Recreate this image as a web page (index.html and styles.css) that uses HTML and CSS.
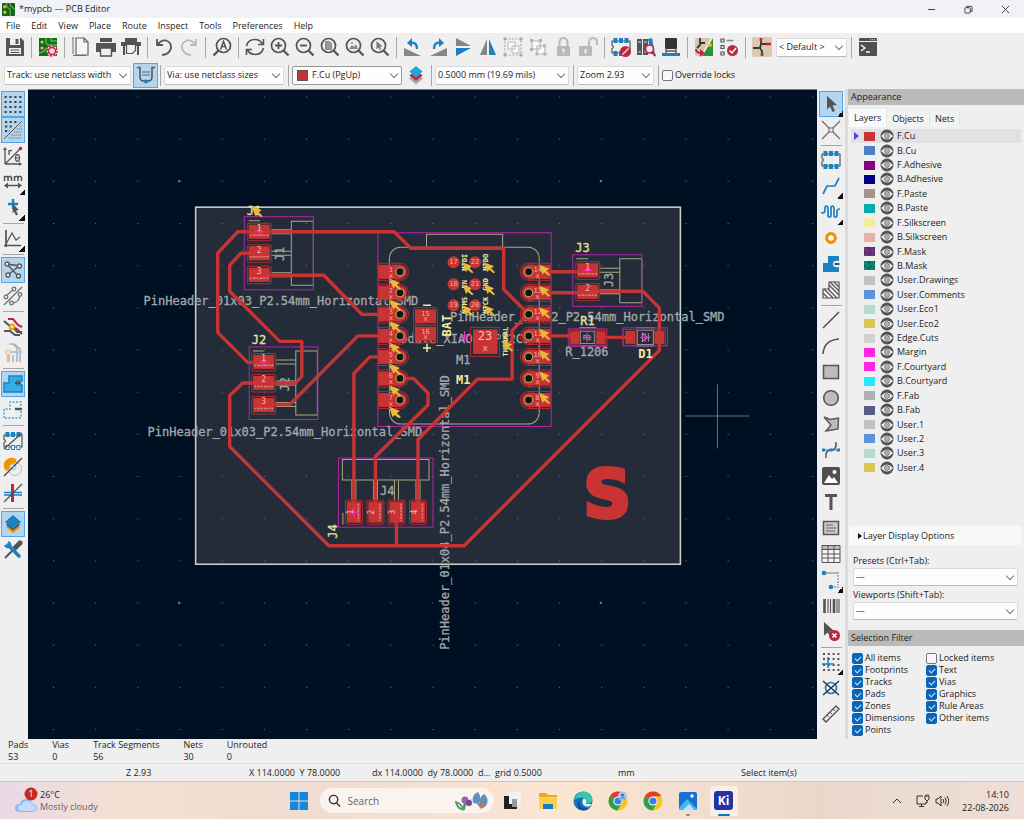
FILE: index.html
```html
<!DOCTYPE html>
<html lang="en">
<head>
<meta charset="utf-8">
<title>*mypcb — PCB Editor</title>
<meta name="viewport" content="width=device-width, initial-scale=1">
<link rel="stylesheet" href="styles.css">
</head>
<body>
<svg class="defs" aria-hidden="true">
  <defs>
    <symbol id="eye" viewBox="0 0 14 14"><circle cx="7" cy="7" r="6.500" fill="#545454"/><path d="M1 7Q7 0 13 7Q7 14 1 7Z" fill="#efefef"/><circle cx="7" cy="7" r="2.300" fill="none" stroke="#545454" stroke-width="1"/><circle cx="7" cy="7" r=".8" fill="#545454"/></symbol>
    <symbol id="mag" viewBox="0 0 20 20"><circle cx="8.500" cy="8.500" r="7" fill="none" stroke="#545454" stroke-width="1.700"/><path d="M13.500 13.500l5 5" stroke="#545454" stroke-width="2.300"/></symbol>
    <symbol id="lockbody" viewBox="0 0 20 20"><rect x="4" y="9" width="13" height="10" rx="1" fill="#b9b9b9"/><circle cx="10.500" cy="13" r="1.500" fill="#eee"/><path d="M10.500 13v3.500" stroke="#eee" stroke-width="1.300"/></symbol>
    <symbol id="fp" viewBox="0 0 20 20"><path d="M1 4v4.500q3 1.500 0 3V16H19V4Z" fill="none" stroke="#545454" stroke-width="1.200"/><path d="M2.500 1h4v5h-4zM8 1h4v5H8zM13.500 1h4v5h-4zM2.500 14h4v5h-4zM8 14h4v5H8zM13.500 14h4v5h-4z" fill="#1a81c4"/></symbol>
    <symbol id="cursor" viewBox="0 0 20 20"><path d="M6 2L16 11L11.500 11.500L14 17L11.500 18L9 12.500L6 15.500Z" fill="#545454"/></symbol>
    <symbol id="nogo" viewBox="0 0 10 10"><circle cx="5" cy="5" r="5" fill="#bf2641"/></symbol>
    <symbol id="chrome" viewBox="0 0 20 20"><circle cx="10" cy="10" r="9.500" fill="#f9c51c"/><path d="M10 10L1.800 5.200A9.500 9.500 0 0 1 18.300 5.300H10Z" fill="#e33b2e"/><path d="M10 10L1.800 5.200A9.500 9.500 0 0 0 9.500 19.500L14 12Z" fill="#2da14c"/><circle cx="10" cy="10" r="4.600" fill="#fff"/><circle cx="10" cy="10" r="3.600" fill="#3f7ee8"/></symbol>
  </defs>
</svg>

<header class="titlebar">
  <svg class="app-icon" viewBox="0 0 14 14"><rect width="14" height="14" rx="1" fill="#12641c"/><path d="M5 0v4l4 3v7M9 0v3l5 4" stroke="#53a846" stroke-width="1.500" fill="none"/><circle cx="3" cy="4" r="1.800" fill="#e0b13d"/><circle cx="3" cy="10" r="1.800" fill="#e0b13d"/></svg>
  <h1>*mypcb — PCB Editor</h1>
  <div class="window-controls">
    <button aria-label="Minimize"><svg viewBox="0 0 10 10"><path d="M1 5h8" /></svg></button>
    <button aria-label="Restore"><svg viewBox="0 0 10 10"><rect x="1" y="3" width="6" height="6" rx="1"/><path d="M3 3V1.500h5q1 0 1 1V7H7"/></svg></button>
    <button aria-label="Close"><svg viewBox="0 0 10 10"><path d="M1 1l8 8M9 1l-8 8"/></svg></button>
  </div>
</header>

<nav class="menubar" aria-label="Main menu">
  <button>File</button><button>Edit</button><button>View</button><button>Place</button><button>Route</button><button>Inspect</button><button>Tools</button><button>Preferences</button><button>Help</button>
</nav>

<div class="toolbar icons" role="toolbar" aria-label="Main toolbar">
  <button aria-label="Save"><svg viewBox="0 0 20 20"><path d="M1 1h15l3 3v15H1Z" fill="#545454"/><path d="M5 1h10v7H5zM4 11h12v6H4z" fill="#efefef"/><path d="M10.500 2h3v5h-3z" fill="#545454"/><path d="M5.500 13h9M5.500 15.500h9" stroke="#545454"/></svg></button>
  <span class="sep"></span>
  <button aria-label="Board setup"><svg viewBox="0 0 20 20"><rect x="1" y="1" width="18" height="18" fill="#136b1e"/><path d="M8 1v4q0 3 4 3h7M1 16q6-1 7-5M13 1v3h6" stroke="#5cb04c" stroke-width="1.500" fill="none"/><circle cx="4" cy="5" r="1.500" fill="#e9c14a"/><circle cx="4" cy="11" r="1.500" fill="#e9c14a"/><circle cx="14" cy="14" r="5.500" fill="#f3dfe3"/><circle cx="14" cy="14" r="3.500" fill="none" stroke="#cc2048" stroke-width="1.500"/><circle cx="14" cy="14" r="5" fill="none" stroke="#cc2048" stroke-width="1.500" stroke-dasharray="2 1.920"/></svg></button>
  <span class="sep"></span>
  <button aria-label="Page settings"><svg viewBox="0 0 20 20"><path d="M5 1h8l4 4v13H5ZM13 1v4h4" fill="#f6f6f6" stroke="#656565" stroke-width="1.200"/><path d="M2 1v16M1 1h2M2 18.500h13" stroke="#656565" stroke-width=".9"/></svg></button>
  <button aria-label="Print"><svg viewBox="0 0 20 20"><path d="M4 1h12v4H4zM0 6h20v9h-4v-3H4v3H0z" fill="#545454"/><path d="M4.500 11h11v8h-11z" fill="#efefef" stroke="#545454" stroke-width="1.400"/></svg></button>
  <button aria-label="Plot"><svg viewBox="0 0 20 20"><path d="M4 1h12v4H4zM0 5h20v4H0zM2 9h2v9H2zM16 9h2v9h-2z" fill="#545454"/><path d="M5.500 7.500h9v6l-3 3h-6z" fill="#efefef" stroke="#545454" stroke-width="1.200"/></svg></button>
  <span class="sep"></span>
  <button aria-label="Undo"><svg viewBox="0 0 20 20"><path d="M3 2v6h6M3.500 8Q7 2.500 12 3.500Q17.500 5 17 11Q15.500 17.500 8 18" fill="none" stroke="#545454" stroke-width="1.800"/></svg></button>
  <button aria-label="Redo" disabled><svg viewBox="0 0 20 20"><path d="M17 2v6h-6M16.500 8Q13 2.500 8 3.500Q2.500 5 3 11Q4.500 17.500 12 18" fill="none" stroke="#b9b9b9" stroke-width="1.800"/></svg></button>
  <span class="sep"></span>
  <button aria-label="Find"><svg viewBox="0 0 20 20"><circle cx="11.500" cy="8.500" r="7" fill="none" stroke="#545454" stroke-width="1.700"/><path d="M6.500 13.500l-5 5" stroke="#545454" stroke-width="2.300"/><path d="M8.500 12.500l3-8 3 8M9.500 9.500h4" fill="none" stroke="#545454" stroke-width="1.500"/></svg></button>
  <span class="sep"></span>
  <button aria-label="Refresh"><svg viewBox="0 0 20 20"><path d="M1.500 9Q3 2.500 10 2.500Q15 2.500 17.500 7M18.500 2v5.500H13M18.500 11Q17 17.500 10 17.500Q5 17.500 2.500 13M1.500 18v-5.500H7" fill="none" stroke="#545454" stroke-width="1.600"/></svg></button>
  <button aria-label="Zoom in"><svg viewBox="0 0 20 20"><use href="#mag"/><path d="M5 8.500h7M8.500 5v7" stroke="#545454" stroke-width="1.800"/></svg></button>
  <button aria-label="Zoom out"><svg viewBox="0 0 20 20"><use href="#mag"/><path d="M5 8.500h7" stroke="#545454" stroke-width="1.800"/></svg></button>
  <button aria-label="Zoom to fit"><svg viewBox="0 0 20 20"><use href="#mag"/><path d="M5.500 4.500h4l2 2v6h-6z" fill="#999" stroke="#777" stroke-width=".8"/></svg></button>
  <button aria-label="Zoom to objects"><svg viewBox="0 0 20 20"><use href="#mag"/><path d="M4 12l3-4 2 2 2-3 2 5z" fill="#888"/><circle cx="7" cy="6" r="1" fill="#888"/></svg></button>
  <button aria-label="Zoom to selection"><svg viewBox="0 0 20 20"><use href="#mag"/><path d="M6.500 4l6 5.500-2.500.3 1.200 2.700-1.300.6-1.200-2.700-2.200 1.800z" fill="#777"/></svg></button>
  <span class="sep"></span>
  <button aria-label="Rotate counterclockwise"><svg viewBox="0 0 20 20"><path d="M1 11L18 19H1Z" fill="#858585"/><path d="M6 6q8-2 8 6" fill="none" stroke="#1a81c4" stroke-width="2.200"/><path d="M9 1L4 6L9 10Z" fill="#1a81c4"/></svg></button>
  <button aria-label="Rotate clockwise"><svg viewBox="0 0 20 20"><path d="M19 11L2 19H19Z" fill="#858585"/><path d="M14 6q-8-2-8 6" fill="none" stroke="#1a81c4" stroke-width="2.200"/><path d="M11 1L16 6L11 10Z" fill="#1a81c4"/></svg></button>
  <button aria-label="Flip vertically"><svg viewBox="0 0 20 20"><path d="M3 1L18 9H3Z" fill="#858585"/><path d="M3 19L18 11H3Z" fill="#1a81c4"/></svg></button>
  <button aria-label="Mirror"><svg viewBox="0 0 20 20"><path d="M9 2V18H2Z" fill="#858585"/><path d="M11 2V18H18Z" fill="#1a81c4"/></svg></button>
  <button aria-label="Group" disabled><svg viewBox="0 0 20 20"><rect x="2" y="2" width="16" height="16" fill="none" stroke="#aaa" stroke-width="1.200" stroke-dasharray="2 1.500"/><path d="M0.500.5h3v3h-3zM16.500.5h3v3h-3zM.5 16.500h3v3h-3zM16.500 16.500h3v3h-3z" fill="#aaa"/><path d="M5 5h7v7H5zM9 9h7v7H9z" fill="#fafafa" stroke="#bbb"/></svg></button>
  <button aria-label="Ungroup" disabled><svg viewBox="0 0 20 20"><path d="M4 4h8v8H4zM9 9h8v8H9z" fill="#fafafa" stroke="#b3b3b3" stroke-width="1.200"/><path d="M2 2h3v3H2zM11 2h3v3h-3zM2 11h3v3H2zM15 7.500h3v3h-3zM7.500 15.500h3v3h-3zM15.500 15.500h3v3h-3z" fill="#b3b3b3"/></svg></button>
  <button aria-label="Lock" disabled><svg viewBox="0 0 20 20"><use href="#lockbody"/><path d="M6.500 9V6q0-5 4-5t4 5v3" fill="none" stroke="#b9b9b9" stroke-width="2"/></svg></button>
  <button aria-label="Unlock" disabled><svg viewBox="0 0 20 20"><path d="M1 9h13v9q0 1-1 1H2q-1 0-1-1z" fill="#b9b9b9"/><path d="M7.500 12v4.500" stroke="#eee" stroke-width="2"/><path d="M11 9V6q0-5 4-5t4 5v2" fill="none" stroke="#b9b9b9" stroke-width="2"/></svg></button>
  <span class="sep"></span>
  <button aria-label="Footprint editor"><svg viewBox="0 0 20 20"><use href="#fp"/><use href="#nogo" x="9" y="9" width="11" height="11"/><path d="M11.500 17.500l6-6" stroke="#f2d5da" stroke-width="1.500"/></svg></button>
  <button aria-label="Footprint library"><svg viewBox="0 0 20 20"><path d="M1 2h5v16H1zM7 2h5v16H7z" fill="#545454"/><path d="M2 5h3M8 5h3M2 15h3M8 15h3" stroke="#ddd"/><path d="M12 2l4-1 3 16h-4z" fill="#1a81c4"/><circle cx="13.500" cy="12" r="4" fill="#f3e9ee" stroke="#bf2641" stroke-width="1.700"/><path d="M16 15l3.500 4" stroke="#bf2641" stroke-width="2.200"/></svg></button>
  <button aria-label="Footprint viewer"><svg viewBox="0 0 20 20"><rect x="4" y="1" width="12" height="11" rx="1" fill="#333"/><path d="M5 12v4M15 12v4M5 14h10" stroke="#555" stroke-width="1.300"/><path d="M1 16h18v3H1z" fill="#1a81c4"/></svg></button>
  <span class="sep"></span>
  <button aria-label="Update from schematic"><svg viewBox="0 0 20 20"><rect x="1" y="1" width="18" height="18" rx="2" fill="#d5c7ad"/><path d="M19 1L8 19H19Z" fill="#2f8f35"/><path d="M18 1L8 18" stroke="#eee" stroke-width="1.500"/><path d="M6 1v7L3 11M6 6h5" stroke="#333" stroke-width="1.800" fill="none"/><circle cx="16" cy="8" r="2" fill="#f0b429"/><path d="M2 12q0 4 5 4" stroke="#bf2641" stroke-width="2" fill="none"/><path d="M6 12l5 4-5 4z" fill="#bf2641"/></svg></button>
  <button aria-label="Design rules checker"><svg viewBox="0 0 20 20"><path d="M2 2h3v3H2zM2 8.500h3v3H2zM2 15h3v3H2z" fill="none" stroke="#545454" stroke-width="1.200"/><path d="M7.500 3.500h7" stroke="#888" stroke-width="1.600"/><use href="#nogo" x="8" y="8" width="11" height="11"/><path d="M10.500 13.500l2.500 2.500 4-5" fill="none" stroke="#fff" stroke-width="1.500"/></svg></button>
  <span class="sep"></span>
  <button aria-label="Schematic editor"><svg viewBox="0 0 20 20"><rect width="20" height="20" rx="2" fill="#d8c9af"/><path d="M9 1v6l-1 4M9 7h6M7 11H1M7 10l3 4v5" stroke="#3a3a3a" stroke-width="1.800" fill="none"/><path d="M9 1v3M14 7h5M10 16v3" stroke="#bf2641" stroke-width="2.600"/></svg></button>
  <span class="combo combo-set"><select aria-label="Variant"><option>&lt; Default &gt;</option></select></span>
  <span class="sep"></span>
  <button aria-label="Scripting console"><svg viewBox="0 0 20 20"><rect x="1" y="1" width="18" height="18" rx="1" fill="#4f4f4f"/><path d="M1 4.500h18" stroke="#eee"/><path d="M12 2.700h6" stroke="#ddd" stroke-dasharray="1 1"/><path d="M3 8l4 3-4 3M8 15h4" stroke="#fff" stroke-width="1.300" fill="none"/></svg></button>
</div>

<div class="toolbar options" role="toolbar" aria-label="Board options">
  <span class="combo combo-track"><select aria-label="Track width"><option>Track: use netclass width</option></select></span>
  <button class="active" aria-label="Use existing track width"><svg viewBox="0 0 20 20"><path d="M1 2.500h3V12q0 4 4 4h4q4 0 4-4V2.500h3" fill="none" stroke="#545454" stroke-width="1.500"/><path d="M6 7h8M6 10h8" stroke="#666" stroke-width="1.200"/><circle cx="10" cy="16.500" r="2" fill="#1a81c4"/></svg></button>
  <span class="sep"></span>
  <span class="combo combo-via"><select aria-label="Via size"><option>Via: use netclass sizes</option></select></span>
  <span class="sep"></span>
  <span class="combo combo-layer"><i class="swatch"></i><select aria-label="Active layer"><option>F.Cu (PgUp)</option></select></span>
  <button aria-label="Layer pair"><svg viewBox="0 0 20 20"><path d="M10 8l7 5.500-7 6-7-6z" fill="#aaa"/><path d="M10 5l6.500 5.500L10 16l-6.500-5.500z" fill="#bf2641"/><path d="M10 1l6.500 5.500L10 13l-6.500-6.500z" fill="#24a5df"/></svg></button>
  <span class="sep"></span>
  <span class="combo combo-grid"><select aria-label="Grid"><option>0.5000 mm (19.69 mils)</option></select></span>
  <span class="sep"></span>
  <span class="combo combo-zoom"><select aria-label="Zoom"><option>Zoom 2.93</option></select></span>
  <span class="sep"></span>
  <label class="check"><input type="checkbox">Override locks</label>
</div>

<main class="workspace">
  <div class="sidebar left" role="toolbar" aria-label="Display options">
    <button class="active" aria-label="Show grid"><svg viewBox="0 0 20 20"><path d="M1.500 3h17M1.500 8h17M1.500 13h17M1.500 18h17" stroke="#444" stroke-width="2.200" stroke-dasharray="2.200 2.700"/></svg></button>
    <button class="active" aria-label="Grid overrides"><svg viewBox="0 0 20 20"><path d="M2 2h14M2 6.500h9M2 11h5" stroke="#444" stroke-width="2.200" stroke-dasharray="2.200 2.400"/><path d="M1 19L19 1" stroke="#555"/><path d="M17 6h2M14 9h5M11 12h8M8 15h11M6 18h13" stroke="#667" stroke-width="1.200" stroke-dasharray="1.200 1"/></svg></button>
    <button aria-label="Polar coordinates"><svg viewBox="0 0 20 20"><path d="M2 18V2M2 18h16M2 18L17 3" stroke="#545454" stroke-width="1.300" fill="none"/><path d="M0 4l2-3 2 3M16 16l3 2-3 2" fill="#545454"/><circle cx="17.500" cy="2.500" r="1.800" fill="#c7213f"/><path d="M6 4v5M6 6q1-2 3-1.500" stroke="#545454" stroke-width="1.300" fill="none"/><ellipse cx="14.500" cy="12" rx="2" ry="3.300" fill="none" stroke="#545454" stroke-width="1.200"/><path d="M12.500 12h4" stroke="#545454"/></svg></button>
    <button class="more" aria-label="Units: mm"><svg viewBox="0 0 20 20"><path d="M1.500 9V4M1.500 5.500q2-2.500 3.500 0V9M5 5.500q2-2.500 3.500 0V9M11.500 9V4M11.500 5.500q2-2.500 3.500 0V9M15 5.500q2-2.500 3.500 0V9" fill="none" stroke="#545454" stroke-width="1.500"/><path d="M3 13.500h14" stroke="#545454" stroke-width="1.500"/><path d="M5 10.500l-4 3 4 3zM15 10.500l4 3-4 3z" fill="#545454"/></svg></button>
    <button class="more" aria-label="Crosshair"><svg viewBox="0 0 20 20"><path d="M10 1v10M5 6h10" stroke="#1a81c4" stroke-width="2.400"/><path d="M10 6l6 6-3 .5 2 4-2 1-2-4-1.500 2z" fill="#545454"/></svg></button>
    <span class="sep"></span>
    <button class="more" aria-label="Drawing angle"><svg viewBox="0 0 20 20"><path d="M3 1v17M1 16.500h17" stroke="#545454" stroke-width="1.700"/><path d="M3 15L9 4l4 7 4-3" fill="none" stroke="#545454" stroke-width="1.300"/></svg></button>
    <span class="sep"></span>
    <button class="active" aria-label="Show ratsnest"><svg viewBox="0 0 20 20"><path d="M4 4L15 16M4 4l13 2M5 15L16 6" stroke="#545454" stroke-width="1.300"/><g fill="#e9f3fa" stroke="#545454" stroke-width="1.300"><circle cx="4" cy="4" r="2"/><circle cx="16.500" cy="6" r="2"/><circle cx="5" cy="15" r="2"/><circle cx="15.500" cy="16" r="2"/></g></svg></button>
    <button aria-label="Curved ratsnest"><svg viewBox="0 0 20 20"><path d="M1 19L19 1M3 10L11 3M9 17q7 0 8-8" fill="none" stroke="#707070" stroke-width="1.300"/><g fill="#eee" stroke="#707070" stroke-width="1.300"><circle cx="3" cy="11" r="1.800"/><circle cx="11" cy="3" r="1.800"/><circle cx="8.500" cy="17" r="1.800"/><circle cx="17" cy="8.500" r="1.800"/></g></svg></button>
    <span class="sep"></span>
    <button aria-label="Net color mode"><svg viewBox="0 0 20 20"><path d="M5 2h5l5 6 4 2M10 10l4 2 5 5" fill="none" stroke="#c7213f" stroke-width="2"/><path d="M1 4l7 6M1 14h6l5 4h5M10 10l4 5h5" fill="none" stroke="#545454" stroke-width="2"/><circle cx="9" cy="10" r="2.300" fill="#eee" stroke="#f39200" stroke-width="1.800"/></svg></button>
    <button aria-label="High contrast mode"><svg viewBox="0 0 20 20"><path d="M6 1h4l4 4v14M11 1l6 5v13M6 9v10M10 12v7" fill="none" stroke="#b5b5b5" stroke-width="1.700"/><path d="M5 10v9" stroke="#e4b2b8" stroke-width="2.400"/><path d="M7 9h12" stroke="#9bcbea" stroke-width="2"/><circle cx="5" cy="9" r="2.300" fill="#eee" stroke="#f3d09c" stroke-width="1.600"/></svg></button>
    <span class="sep"></span>
    <button class="active" aria-label="Filled zones"><svg viewBox="0 0 20 20"><path d="M1 18V9h5V2h13v5h-5v4h5v7z" fill="#35aee5" stroke="#1a81c4" stroke-width="1.500"/><path d="M12 9h6" stroke="#545454" stroke-width="2.500"/></svg></button>
    <button aria-label="Zone outlines"><svg viewBox="0 0 20 20"><path d="M1 18V9h6V2h11v5M18 11v7H1" fill="none" stroke="#4ba4d6" stroke-width="1.400" stroke-dasharray="2 1.500"/><path d="M12 9h7" stroke="#545454" stroke-width="2.500"/></svg></button>
    <span class="sep"></span>
    <button aria-label="Sketch footprints"><svg viewBox="0 0 20 20"><use href="#fp"/><path d="M3.500 15h2v3h-2zM9 15h2v3H9zM14.500 15h2v3h-2z" fill="#fff"/><path d="M1 18L19 2" stroke="#545454" stroke-width="1.400"/></svg></button>
    <button aria-label="Sketch vias"><svg viewBox="0 0 20 20"><circle cx="12" cy="12" r="6.500" fill="none" stroke="#bbb"/><path d="M3 14A7 7 0 0 1 14 3l-3 4a3 3 0 0 0-4 4z" fill="#f39200"/><circle cx="10" cy="10" r="3" fill="none" stroke="#bbb"/><path d="M1 19L19 1" stroke="#545454" stroke-width="1.400"/></svg></button>
    <button aria-label="Sketch tracks"><svg viewBox="0 0 20 20"><path d="M1 9.500h18M1 12h18" stroke="#1a81c4" stroke-width="1.600"/><path d="M9.500 1v18" stroke="#bf2641" stroke-width="3"/><path d="M1 19L19 1" stroke="#545454" stroke-width="1.200"/></svg></button>
    <span class="sep"></span>
    <button class="active" aria-label="Layers manager"><svg viewBox="0 0 20 20"><path d="M10 8l7 5.500-7 5.500-7-5.500z" fill="#f39200"/><path d="M10 5l7 6-7 5.500-7-5.500z" fill="#545454"/><path d="M10 1l8 7-8 7-8-7z" fill="#1a81c4"/></svg></button>
    <button aria-label="Properties"><svg viewBox="0 0 20 20"><path d="M2 18L13 7" stroke="#545454" stroke-width="2"/><path d="M12 8l5-5" stroke="#545454" stroke-width="5" stroke-linecap="round"/><path d="M5 5l11 11" stroke="#1a81c4" stroke-width="3.500" stroke-linecap="round"/><path d="M2 5q2 4 6 1M5 2q4 2 2 5" fill="none" stroke="#1a81c4" stroke-width="2"/></svg></button>
  </div>

  <div class="canvas">
    <svg id="board" viewBox="28 90 789 648" preserveAspectRatio="xMidYMid slice" role="img" aria-label="Board layout">
      <defs>
        <pattern id="dots" x="33" y="76" width="42.1" height="42.1" patternUnits="userSpaceOnUse"><rect x="20.500" y="20.500" width="1.200" height="1" fill="#657180"/></pattern>
        <g id="arrow"><path d="M-5-5L5-1L2 1L6 5L4.500 6L0 2.500L-1.500 5Z" fill="#e9b93a"/></g>
        <g id="pad"><rect x="-12" y="-8.500" width="24" height="17.500" rx="2" class="clear"/><rect x="-10.500" y="-7" width="21" height="14" class="cu"/></g>
        <g id="vpad"><rect x="-8.500" y="-12" width="17" height="24" rx="2" class="clear"/><rect x="-7" y="-10.500" width="14" height="21" class="cu"/></g>
        <g id="plus"><path d="M-4.500 0h9M0-4.500v9" stroke="#ff26c8" stroke-width="1.200"/></g>
      </defs>
      <rect x="196" y="207" width="484" height="357" fill="#232c38"/>
      <rect x="-400" y="-400" width="1800" height="1700" fill="url(#dots)"/>
      <g fill="#7b848e"><rect x="178.500" y="180" width="2" height="2"/><rect x="599.500" y="180" width="2" height="2"/><rect x="178.500" y="601" width="2" height="2"/><rect x="599.500" y="601" width="2" height="2"/></g>
      <rect x="196" y="207" width="484" height="356.500" fill="none" stroke="#c9cbc7" stroke-width="1.600"/>

      <g class="silk">
        <path d="M291.500 221h22v64h-22zM296 350.500h21.500v64H296zM619.500 258.500h22v44h-22zM342.500 459h86.500v20.500h-86.500z"/>
        <path d="M271 229.500h20M271 233.500h20M271 251h20M271 255h20M271 272.500h20M271 276.500h20M276 359.500h20M276 363.500h20M276 380.500h20M276 384.500h20M276 402h20M276 406h20M599 268h20M599 272h20M599 289.500h20M599 293.500h20"/>
        <path d="M352 480v19M356 480v19M373.500 480v19M377.500 480v19M394.500 480v19M398.500 480v19M416 480v19M420 480v19M249 220.500h11M253 350.500h11M576 258.500h12M343 512v12"/>
        <rect x="389.500" y="247" width="149.500" height="176.500" rx="11"/><path d="M426.500 247v-13h76v13"/>
        <path d="M579 327.500h17M579 345.500h17M636 327.500h18M636 345.500h18"/>
      </g>
      <g class="courtyard"><rect x="244.500" y="216.500" width="69" height="73"/><rect x="249.500" y="346.500" width="68.500" height="72.500"/><rect x="338.500" y="457.500" width="94.500" height="69"/><rect x="378" y="232.500" width="173" height="193.500"/><rect x="572.500" y="254.500" width="69" height="51.500"/><rect x="568" y="328.500" width="38.500" height="17.500"/><rect x="622.500" y="327.500" width="44.500" height="18"/></g>

      <g class="fab">
        <text x="144" y="305">PinHeader_01x03_P2.54mm_Horizontal_SMD</text>
        <text x="148" y="435">PinHeader_01x03_P2.54mm_Horizontal_SMD</text>
        <text x="450" y="321">PinHeader_01x02_P2.54mm_Horizontal_SMD</text>
        <text x="393" y="343">Module_XIAO-ESP32C3</text>
        <text transform="translate(449 649) rotate(-90)">PinHeader_01x04_P2.54mm_Horizontal_SMD</text>
        <text x="456" y="364">M1</text><text x="380" y="494">J4</text><text x="565" y="356">R_1206</text>
        <text transform="translate(284 261) rotate(-90)">J1</text><text transform="translate(289 391) rotate(-90)">J2</text><text transform="translate(613 287) rotate(-90)">J3</text>
      </g>

      <g class="tracks">
        <path d="M259 231.500H238L218 253V332L248 362H264"/>
        <path d="M259 231.500H394L411 248H503.500V289L528 313.500"/>
        <path d="M259 253H241L230 265V291L280 341H302V376L296 382.500H264"/>
        <path d="M259 275H324L362 314H400"/>
        <path d="M264 382.500H243L230 395V446L329 545H464L659 350V307.500L642.500 291H587"/>
        <path d="M264 404H290L358 335.500H400"/>
        <path d="M400 356.500H370L354 373V511"/>
        <path d="M400 378H413.500L428 392.500V404.500L375.500 456V511"/>
        <path d="M418 511V439L477.500 378.700H512V330L528 313.500"/>
        <path d="M396.500 511V545M528 271.500H587M528 292.500H587M528 335.500H575M600 337H629"/>
      </g>

      <g class="padgroup">
        <use href="#pad" x="259.500" y="231.500"/><use href="#pad" x="259.500" y="253"/><use href="#pad" x="259.500" y="274.500"/>
        <use href="#pad" x="264" y="361.500"/><use href="#pad" x="264" y="382.500"/><use href="#pad" x="264" y="404.500"/>
        <use href="#pad" x="587.500" y="270"/><use href="#pad" x="587.500" y="291.500"/>
        <use href="#pad" x="425.500" y="316"/><use href="#pad" x="425.500" y="333.500"/>
        <use href="#vpad" x="354" y="511.500"/><use href="#vpad" x="375.500" y="511.500"/><use href="#vpad" x="396.500" y="511.500"/><use href="#vpad" x="418" y="511.500"/>
        <rect class="clear" x="470.500" y="327" width="29" height="29"/><rect class="cu" x="473" y="329" width="24.500" height="24.500"/>
        <rect class="clear" x="569" y="330" width="11" height="15"/><rect class="cu" x="570" y="331" width="9" height="13"/><rect class="clear" x="595" y="330" width="11" height="15"/><rect class="cu" x="596" y="331" width="9" height="13"/>
        <rect class="clear" x="623" y="329" width="13" height="16"/><rect class="cu" x="625" y="330.500" width="10" height="13"/><rect class="clear" x="653" y="329" width="12" height="16"/><rect class="cu" x="654" y="330.500" width="10" height="13"/>
      </g>
      <g id="pins"></g>
      <g id="testpads"></g>

      <path d="M580 331h14v12h-14zM637 330h16v14h-16z" fill="none" stroke="#8d8f92"/>
      <g class="tiny fabtext"><text x="587" y="340">R1</text></g>
      <path d="M640 337h10M642 333v8l5-4zM648 333v8" stroke="#d38ed0" fill="none"/>
      <use href="#plus" x="259.500" y="231.500"/><use href="#plus" x="264" y="361.500"/><use href="#plus" x="587.500" y="270"/><use href="#plus" x="354" y="511.500"/><use href="#plus" x="464.500" y="335.500"/><use href="#plus" x="587" y="337"/><use href="#plus" x="645" y="337"/>

      <g class="padtext">
        <text x="259.500" y="231">1</text><text x="259.500" y="252.500">2</text><text x="259.500" y="274">3</text>
        <text x="264" y="361">1</text><text x="264" y="382">2</text><text x="264" y="404">3</text>
        <text x="587.500" y="269.500">1</text><text x="587.500" y="291">2</text>
        <text transform="translate(353 511.500) rotate(-90)">1</text><text transform="translate(374.500 511.500) rotate(-90)">2</text><text transform="translate(395.500 511.500) rotate(-90)">3</text><text transform="translate(417 511.500) rotate(-90)">4</text>
      </g>
      <g stroke="#e58f8f" stroke-width="1.600" stroke-dasharray="2 1 3 .7" opacity=".75"><path d="M250 235h19M250 256.500h19M250 278h19M254.500 365h19M254.500 386h19M254.500 408h19M578 273.500h19M578 295h19M358.500 503v17M380 503v17M401 503v17M422.500 503v17"/></g>
      <g class="tiny padlabel"><text x="425.500" y="316">15</text><text x="425.500" y="333.500">16</text><text x="425.500" y="321">x</text><text x="425.500" y="339">x</text><text x="485" y="351" class="big">x</text></g>
      <text x="485" y="340" class="pad23">23</text>

      <g class="silktext">
        <text x="247" y="215">J1</text><text x="252" y="344">J2</text><text x="575" y="252">J3</text><text x="580" y="325">R1</text>
        <text transform="translate(337 538) rotate(-90)">J4</text>
        <text class="bold" x="456" y="384">M1</text><text class="bold" x="638" y="358">D1</text>
        <text class="bold" transform="translate(451 336) rotate(-90)">BAT</text>
        <path d="M423 305h8M423 347.500h8M427 343.500v8" stroke="#f2eda1" stroke-width="1.500"/>
        <text class="small" transform="translate(508 356) rotate(-90)">THERMAL</text>
      </g>
      <use href="#arrow" x="257" y="211"/><use href="#arrow" x="507" y="345"/>
      <text x="607" y="516" class="letter">S</text>
      <path d="M685 415.500h64M717 384v64" stroke="#66717e" stroke-width="1"/>
    </svg>
  </div>

  <div class="sidebar right" role="toolbar" aria-label="Drawing tools">
    <button class="active more" aria-label="Select"><svg viewBox="0 0 20 20"><use href="#cursor"/></svg></button>
    <button aria-label="Local ratsnest"><svg viewBox="0 0 20 20"><path d="M1 1l18 18M19 1L1 19" stroke="#707070" stroke-width="1.300"/><rect x="8" y="8" width="4" height="4" fill="#eee" stroke="#707070"/></svg></button>
    <span class="sep"></span>
    <button aria-label="Place footprint"><svg viewBox="0 0 20 20"><use href="#fp"/></svg></button>
    <button class="more" aria-label="Route track"><svg viewBox="0 0 20 20"><path d="M2 18l4-8h8l4-8" fill="none" stroke="#1a81c4" stroke-width="1.700"/></svg></button>
    <button class="more" aria-label="Tune length"><svg viewBox="0 0 20 20"><path d="M0 11h2q2 0 2-4 0-3 1.500-3T7 7v6q0 2 1.500 2T10 13V7q0-3 1.500-3T13 7v6q0 2 1.500 2T16 13V9q0-2 3-2" fill="none" stroke="#1a81c4" stroke-width="1.700"/></svg></button>
    <button aria-label="Place via"><svg viewBox="0 0 20 20"><circle cx="10" cy="10" r="4.300" fill="#fff" stroke="#f39200" stroke-width="3.200"/></svg></button>
    <button aria-label="Draw zone"><svg viewBox="0 0 20 20"><path d="M2 18V9h5V2h11v5q-6-1-6 3t6 3v5z" fill="#1a81c4"/><path d="M13.500 10h5" stroke="#545454" stroke-width="2.200"/></svg></button>
    <button aria-label="Rule area"><svg viewBox="0 0 20 20"><path d="M2 18V9h6V2h10v16z" fill="#f5f5f5" stroke="#545454" stroke-width="1.200"/><path d="M3 9l9 9M7 9l9 9M8 5l10 10M9 2l9 9M13 2l5 5M2 13l5 5" stroke="#545454" stroke-width="1.300"/></svg></button>
    <span class="sep"></span>
    <button aria-label="Draw line"><svg viewBox="0 0 20 20"><path d="M2 18L18 2" stroke="#545454" stroke-width="1.600"/></svg></button>
    <button aria-label="Draw arc"><svg viewBox="0 0 20 20"><path d="M2 18Q3 4 18 3" fill="none" stroke="#545454" stroke-width="1.600"/></svg></button>
    <button aria-label="Draw rectangle"><svg viewBox="0 0 20 20"><rect x="2.500" y="3.500" width="15" height="13" fill="#bdbdbd" stroke="#545454" stroke-width="1.500"/></svg></button>
    <button aria-label="Draw circle"><svg viewBox="0 0 20 20"><circle cx="10" cy="10" r="7.300" fill="#bdbdbd" stroke="#545454" stroke-width="1.500"/></svg></button>
    <button aria-label="Draw polygon"><svg viewBox="0 0 20 20"><path d="M3 3l6 2.500L17.500 4 17 15l-12 2 5-6z" fill="#bdbdbd" stroke="#545454" stroke-width="1.400"/></svg></button>
    <button aria-label="Draw bezier"><svg viewBox="0 0 20 20"><path d="M5 18q-1-8 5-8t5-8" fill="none" stroke="#545454" stroke-width="1.500"/><path d="M2 10h16" stroke="#1a81c4"/><path d="M1 8.500h3v3H1zM16 8.500h3v3h-3zM8.500 8.500h3v3h-3z" fill="#1a81c4"/></svg></button>
    <button aria-label="Place image"><svg viewBox="0 0 20 20"><rect x="1" y="1" width="18" height="18" rx="2" fill="#4f4f4f"/><path d="M3 17l5-8 3 4 2-2 4 6z" fill="#fff"/><circle cx="13.500" cy="6" r="2" fill="#fff"/></svg></button>
    <button aria-label="Place text"><svg viewBox="0 0 20 20"><path d="M4 3.500h12M10 3v15" stroke="#545454" stroke-width="3"/></svg></button>
    <button aria-label="Place text box"><svg viewBox="0 0 20 20"><rect x="2.500" y="3.500" width="15" height="13" fill="#ccc" stroke="#545454" stroke-width="1.500"/><path d="M5 7h7M5 10h10M5 13h9" stroke="#666"/></svg></button>
    <button aria-label="Place table"><svg viewBox="0 0 20 20"><rect x="1" y="1.500" width="18" height="17" fill="#f7f7f7"/><path d="M1 1.500h18v4H1z" fill="#bbb"/><path d="M1 1.500h18v17H1zM1 5.500h18M1 10h18M1 14h18M7 1.500v17M13 1.500v17" fill="none" stroke="#545454"/></svg></button>
    <button class="more" aria-label="Add dimension"><svg viewBox="0 0 20 20"><path d="M3 3h15" stroke="#777"/><path d="M10 17h8M17 5v10" stroke="#777" stroke-dasharray="2 1"/><circle cx="3" cy="3" r="2.300" fill="#1a81c4"/><circle cx="10" cy="17" r="2.300" fill="#1a81c4"/></svg></button>
    <button aria-label="Place barcode"><svg viewBox="0 0 20 20"><path d="M3.500 3v14M13 3v14" stroke="#545454" stroke-width="2.600"/><path d="M7 3v14M9.500 3v14M16 3v14M18 3v14" stroke="#545454" stroke-width="1.100"/></svg></button>
    <button aria-label="Delete items"><svg viewBox="0 0 20 20"><path d="M3 0l10 9-4 .5 2 5-2 1-2-5-4 3z" fill="#545454"/><use href="#nogo" x="8" y="8" width="11" height="11"/><path d="M11.500 11.500l4 4M15.500 11.500l-4 4" stroke="#fff" stroke-width="1.600"/></svg></button>
    <span class="sep"></span>
    <button class="more" aria-label="Grid origin"><svg viewBox="0 0 20 20"><path d="M2 2h17M2 7h17M2 13h17M2 18h17" stroke="#545454" stroke-width="2" stroke-dasharray="2 2.800"/><path d="M7 5v11M1 12h12" stroke="#1a81c4" stroke-width="1.500"/></svg></button>
    <button aria-label="Drill origin"><svg viewBox="0 0 20 20"><circle cx="10" cy="10" r="5.500" fill="none" stroke="#1a81c4" stroke-width="1.700"/><path d="M2 3l16 14M18 3L2 17" stroke="#333" stroke-width="1.500"/></svg></button>
    <button aria-label="Measure"><svg viewBox="0 0 20 20"><path d="M2 15L15 2l3 3L5 18z" fill="#eee" stroke="#545454" stroke-width="1.400"/><path d="M6 11l2 2M9 8l2 2M12 5l2 2" stroke="#545454"/></svg></button>
  </div>

  <aside class="panel">
    <h2>Appearance</h2>
    <div class="tabs" role="tablist"><button role="tab" aria-selected="true">Layers</button><button role="tab">Objects</button><button role="tab">Nets</button></div>
    <div class="layer-area"><ul id="layers" class="layers"></ul></div>
    <button class="disclosure">Layer Display Options</button>
    <div class="presets">
      <label for="presets">Presets (Ctrl+Tab):</label>
      <span class="combo"><select id="presets"><option>---</option></select></span>
      <label for="viewports">Viewports (Shift+Tab):</label>
      <span class="combo"><select id="viewports"><option>---</option></select></span>
    </div>
    <h2>Selection Filter</h2>
    <div class="filters">
      <label class="check"><input type="checkbox" checked>All items</label><label class="check"><input type="checkbox">Locked items</label>
      <label class="check"><input type="checkbox" checked>Footprints</label><label class="check"><input type="checkbox" checked>Text</label>
      <label class="check"><input type="checkbox" checked>Tracks</label><label class="check"><input type="checkbox" checked>Vias</label>
      <label class="check"><input type="checkbox" checked>Pads</label><label class="check"><input type="checkbox" checked>Graphics</label>
      <label class="check"><input type="checkbox" checked>Zones</label><label class="check"><input type="checkbox" checked>Rule Areas</label>
      <label class="check"><input type="checkbox" checked>Dimensions</label><label class="check"><input type="checkbox" checked>Other items</label>
      <label class="check"><input type="checkbox" checked>Points</label>
    </div>
  </aside>
</main>

<dl class="counts">
  <div><dt>Pads</dt><dd>53</dd></div><div><dt>Vias</dt><dd>0</dd></div><div><dt>Track Segments</dt><dd>56</dd></div><div><dt>Nets</dt><dd>30</dd></div><div><dt>Unrouted</dt><dd>0</dd></div>
</dl>
<div class="status"><span>Z 2.93</span><span>X 114.0000&nbsp; Y 78.0000</span><span>dx 114.0000&nbsp; dy 78.0000&nbsp; d...</span><span>grid 0.5000</span><span>mm</span><span>Select item(s)</span></div>

<footer class="taskbar">
  <button class="weather">
    <svg viewBox="0 0 26 28"><path d="M8 25q-5 0-5-4t5-4q1-5 6-5t6 5q5 0 5 4t-5 4z" fill="#8db9f2"/><path d="M10 24q-4 0-4-3t4-3q1-4 5-4t5 4q4 0 4 3t-4 3z" fill="#c3dcfb"/><circle cx="19" cy="7" r="6.500" fill="#c42b1c"/><text x="19" y="10" text-anchor="middle">1</text></svg>
    <span><b>26°C</b><small>Mostly cloudy</small></span>
  </button>
  <div class="apps">
    <button aria-label="Start"><svg viewBox="0 0 20 20"><path d="M1 1h8.500v8.500H1zM10.500 1H19v8.500h-8.500zM1 10.500h8.500V19H1zM10.500 10.500H19V19h-8.500z" fill="#1287dc"/></svg></button>
    <label class="search"><svg viewBox="0 0 14 14"><circle cx="6" cy="6" r="4.500" fill="none" stroke="#333" stroke-width="1.500"/><path d="M9 9.500l4 4" stroke="#333" stroke-width="1.500"/></svg><input type="search" placeholder="Search" aria-label="Search"><svg class="flowers" viewBox="0 0 36 20"><path d="M9 19q-1-6-7-8 1 6 7 8M10 19q1-8 7-10M9 19l2-8" fill="none" stroke="#4fa06c" stroke-width="1.800"/><circle cx="11" cy="9" r="3.500" fill="#a45bb8"/><circle cx="15" cy="12" r="3" fill="#7d3f9c"/><path d="M19 12Q17 4 24 1q4 5 1 12zM26 13Q25 6 30 3q5 4 3 10-3 5-7 3z" fill="#5b92c0"/><path d="M23 13l4 5 5-3-4-4z" fill="#b5796c"/></svg></label>
    <button aria-label="Task view"><svg viewBox="0 0 20 20"><path d="M1 5h13v13H1z" fill="#222"/><path d="M6 1h12v12H6z" fill="#f3f3f3"/><path d="M9 8h5v8H9z" fill="#999"/></svg></button>
    <button aria-label="File Explorer"><svg viewBox="0 0 20 20"><path d="M1 2h7l2 2h9v14H1z" fill="#e9a81b"/><path d="M1 6h18v12H1z" fill="#fbd14b"/><path d="M5 13h10v5H5z" fill="#1d76c8"/></svg></button>
    <button aria-label="Edge"><svg viewBox="0 0 20 20"><circle cx="10" cy="10" r="9.500" fill="#1574bd"/><path d="M1 9Q3 1 11 .5q8 .5 8.500 8Q19 13 13 12.500q1-6-5-6-4 0-7 2.500" fill="#37c7a8"/><path d="M8 8q-3 3 0 7t9 2Q13 21 7 18.500 1 14 8 8" fill="#0d4f9b"/><path d="M10 8q4-1 3 5l6 0q-3 4-7 2t-2-7" fill="#eef6f5"/></svg></button>
    <button aria-label="Chrome profile"><svg viewBox="0 0 20 20"><use href="#chrome"/><circle cx="14.500" cy="5" r="4.500" fill="#a9c5ef"/><circle cx="14.500" cy="4" r="1.500" fill="#3469b9"/><path d="M12 8q2.500-3 5 0" stroke="#3469b9" fill="none"/></svg></button>
    <button aria-label="Chrome"><svg viewBox="0 0 20 20"><use href="#chrome"/></svg></button>
    <button class="running" aria-label="Photos"><svg viewBox="0 0 20 20"><rect x="1" y="1" width="18" height="18" rx="2" fill="#1671d0"/><path d="M1 17L9 8l10 10v1H2z" fill="#43b9f3"/><path d="M5 19l6-6 5 6z" fill="#b6e4fb"/><circle cx="14" cy="5" r="1.700" fill="#fff"/></svg></button>
    <button class="current" aria-label="KiCad"><span class="kicad">Ki</span></button>
  </div>
  <div class="tray">
    <button aria-label="Hidden icons"><svg viewBox="0 0 14 14"><path d="M3 9l4-4 4 4" /></svg></button>
    <button aria-label="Display"><svg viewBox="0 0 14 14"><path d="M7 2H1v8h9V8M3 12.500h5M5.500 10v2.500M9 2h4v3l-2 2-2-2zM10 .5V2M12 .5V2M11 7v2"/></svg></button>
    <button aria-label="Volume"><svg viewBox="0 0 14 14"><path d="M1 5h2l3-3v10L3 9H1zM8 5q1.500 2 0 4M10 3.500q2.500 3.500 0 7M12 2q3.500 5 0 10"/></svg></button>
    <time><span>14:10</span><span>22-08-2026</span></time>
  </div>
</footer>
<script src="app.js"></script>
</body>
</html>
```

FILE: styles.css
```css
* { box-sizing: border-box; }
body { margin: 0; min-height: 100vh; display: flex; flex-direction: column; background: #efefef; color: #1c1c1c; font: 9px/12px "Open Sans", "Noto Sans", sans-serif; overflow: hidden; }
button, select, input { font: inherit; color: inherit; margin: 0; }
button { border: 0; padding: 0; background: none; display: flex; align-items: center; justify-content: center; }
svg { display: block; }
h1, h2 { margin: 0; font-size: inherit; font-weight: 400; }
.defs { position: absolute; width: 0; height: 0; }

.titlebar { display: flex; align-items: center; height: 18px; padding-left: 2px; background: #f0f2f8; }
.app-icon { width: 13px; height: 13px; margin-right: 4px; }
.window-controls { display: flex; margin-left: auto; }
.window-controls button { width: 37px; height: 17px; }
.window-controls svg { width: 9px; height: 9px; fill: none; stroke: #333; }

.menubar { display: flex; gap: 11px; height: 15px; padding-left: 6px; background: #fff; }

.toolbar { display: flex; align-items: center; height: 28px; }
.toolbar .sep { flex: none; width: 1px; height: 21px; margin: 0 3px 0 4px; background: #a5a5a5; }
.toolbar button { flex: none; width: 25px; height: 25px; }
.toolbar svg { width: 20px; height: 20px; }
.icons { padding-left: 2px; }
.options { padding-left: 4px; }
.toolbar .active, .sidebar .active { background: #b3d5ee; outline: 1px solid #56a5e6; outline-offset: -1px; }

.combo { position: relative; display: block; height: 19px; }
.combo select { appearance: none; width: 100%; height: 100%; padding: 0 14px 0 2px; border: 1px solid #dadada; border-bottom-color: #bbb; border-radius: 2px; background: #fdfdfd; }
.combo::after { content: ""; position: absolute; right: 5px; top: 5px; width: 5px; height: 5px; border: solid #777; border-width: 0 1px 1px 0; transform: rotate(45deg); pointer-events: none; }
.combo-set { width: 71px; margin-left: 2px; }
.combo-track { width: 127px; }
.combo-track + button { margin-left: 2px; margin-right: -2px; }
.combo-via { width: 120px; }
.combo-layer { width: 110px; }
.combo-layer .swatch + select { padding-left: 19px; border-color: #999; }
.combo-layer + button { margin-left: 1px; margin-right: -1px; }
.combo-grid { width: 134px; }
.combo-zoom { width: 77px; }
.swatch { position: absolute; left: 5px; top: 4px; width: 11px; height: 11px; background: #c83434; border: 1px solid #555; }

.check { display: flex; align-items: center; gap: 2px; }
.check input { appearance: none; position: relative; width: 11px; height: 11px; border: 1px solid #777; border-radius: 2px; background: #f8f8f8; }
.check input:checked { border-color: #0b64b8; background: #0b64b8; }
.check input:checked::after { content: ""; position: absolute; left: 2px; top: 2px; width: 5px; height: 3px; border: solid #cfe2f5; border-width: 0 0 1px 1px; transform: rotate(-45deg); }

.workspace { flex: 1; display: flex; min-height: 0; }
.sidebar { flex: none; display: flex; flex-direction: column; align-items: center; width: 28px; padding-top: 2px; }
.sidebar button { flex: none; position: relative; width: 24px; height: 26px; }
.sidebar svg { width: 20px; height: 20px; }
.sidebar .sep { flex: none; width: 21px; height: 1px; margin: 2px 0 1px; background: #a5a5a5; }
.left { padding-right: 2px; }
.left .sep { margin: 2px 0; }
.more::after { content: ""; position: absolute; right: 0; bottom: 0; width: 6px; height: 6px; background: linear-gradient(135deg, transparent 50%, #111 50%); }
.canvas { flex: 1; min-width: 0; display: flex; background: #001023; border-top: 1px solid #777; }
.canvas svg { flex: 1; min-width: 0; width: 100%; }

.clear { fill: none; stroke: #a82e34; }
.cu { fill: #c83434; }
.silk { fill: none; stroke: #aaa982; stroke-width: 1; }
.courtyard { fill: none; stroke: #b424ac; }
.tracks { fill: none; stroke: #c83434; stroke-width: 3.4px; stroke-linejoin: round; }
#board text { font-family: "DejaVu Sans Mono", monospace; font-size: 12px; }
#board .fab text { fill: #a5a8ab; stroke: #a5a8ab; stroke-width: .3px; }
#board .fabtext text { fill: #bbb; }
#board .silktext text { fill: #e6e29c; stroke: #e6e29c; stroke-width: .3px; }
#board .silktext .bold { font-weight: 700; fill: #f2eda1; stroke: none; }
#board .silktext .small, #board .siglabel { font-size: 7px; font-weight: 700; fill: #f2eda1; stroke: none; }
#board .tiny text { font-size: 7px; text-anchor: middle; }
#board .tiny .big { font-size: 9px; }
#board .padlabel text { fill: #eab0b0; }
#board .padtext text { font-size: 8px; text-anchor: middle; fill: #f0b7b7; }
#board .pad23 { text-anchor: middle; fill: #f2c6c6; }
#board .letter { font: 700 66px "DejaVu Sans", sans-serif; text-anchor: middle; fill: #c83434; stroke: #c83434; stroke-width: 4px; }

.panel { flex: none; width: 179px; border-left: 3px solid #dcdcdc; display: flex; flex-direction: column; }
.panel h2 { height: 16px; padding-left: 3px; line-height: 15px; background: #bababa; }
.tabs { display: flex; align-items: flex-end; height: 22px; padding-left: 1px; }
.tabs button { height: 16px; padding: 0 5px; background: #f3f3f3; border-right: 1px solid #e4e4e4; }
.tabs [aria-selected="true"] { height: 18px; background: #fafafa; }
.layer-area { flex: 1; padding: 2px 3px 0; }
.layers { list-style: none; margin: 0; padding: 0; display: grid; grid-auto-rows: 1fr; height: 346px; }
.layers li { display: grid; grid-template-columns: 10px 18px 17px 1fr; align-items: center; padding-left: 1px; }
.layers li[aria-current] { background: #e1e1e1; }
.layers li::before { content: ""; }
.layers li[aria-current]::before { border: solid transparent; border-left-color: #4747f0; border-width: 4px 0 4px 5px; width: 0; margin-left: 2px; }
.layers i { width: 11px; height: 9px; margin-left: 2px; }
.layers svg { width: 14px; height: 14px; }
.layers button { justify-content: flex-start; }
.layers .hatch { background-image: linear-gradient(45deg, #0004 25%, transparent 25% 75%, #0004 75%); background-size: 6px 6px; }
.disclosure { height: 19px; margin: 0 3px 0 1px; padding-left: 9px; justify-content: flex-start; background: #f8f8f8; }
.disclosure::before { content: ""; border: solid transparent; border-width: 3px 0 3px 4px; border-left-color: #111; margin-right: 1px; }
.presets { display: flex; flex-direction: column; padding: 10px 6px 7px 5px; }
.presets .combo { height: 18px; margin: 1px 0 3px; }
.filters { display: grid; grid-template-columns: 74px 1fr; padding: 6px 4px 3px; }

.counts { display: flex; gap: 24px; margin: 0; height: 24px; padding-left: 8px; }
.counts dd { margin: 0; }
.status { display: grid; grid-template-columns: repeat(5, 123px) 1fr; padding: 3px 0 2px 126px; border-top: 1px solid #dedede; white-space: nowrap; }

.taskbar { flex: none; display: grid; grid-template-columns: 1fr auto 1fr; align-items: center; height: 38px; border-top: 1px solid #cfc6c8; background: linear-gradient(90deg, #ead9e6, #f3e0d2 12%, #f0dcd0 30%, #fbe5d3 55%, #e9d8ca 80%, #efded6); }
.weather { justify-self: start; gap: 2px; padding-left: 12px; text-align: left; }
.weather svg { width: 26px; height: 28px; }
.weather text { font: 9px "Open Sans", sans-serif; fill: #fff; }
.weather b, .weather small { display: block; font-size: 9px; line-height: 12px; font-weight: 400; }
.weather small { color: #666; }
.apps { display: flex; align-items: center; padding-right: 5px; }
.apps button { position: relative; width: 35px; height: 34px; }
.apps svg { width: 20px; height: 20px; }
.search { display: flex; align-items: center; width: 174px; height: 25px; margin: 0 2px 0 3px; padding: 0 4px 0 8px; border-radius: 13px; background: #faf3ee; }
.search svg { flex: none; width: 13px; height: 13px; }
.search input { flex: 1; min-width: 0; border: 0; padding: 0 0 0 7px; background: none; font-size: 10px; outline: 0; }
.search input::placeholder { color: #666; }
.search .flowers { width: 36px; height: 20px; }
.apps .current { width: 28px; height: 30px; margin-left: 4px; border-radius: 3px; background: #f9efe8; }
.apps .current::after, .running::after { content: ""; position: absolute; left: 50%; bottom: 0; width: 12px; height: 2px; margin-left: -6px; border-radius: 1px; background: #0b74d1; }
.apps .running::after { width: 4px; margin-left: -2px; bottom: 2px; background: #888; }
.kicad { width: 19px; height: 19px; border-radius: 3px; background: #2433a8; color: #fff; font: 700 12px/19px "Open Sans", sans-serif; }
.tray { justify-self: end; display: flex; align-items: center; gap: 5px; padding-right: 15px; }
.tray svg { width: 14px; height: 14px; fill: none; stroke: #333; }
.tray button:first-child { margin-right: 7px; }
.tray time { display: flex; flex-direction: column; align-items: flex-end; margin-left: 8px; line-height: 13px; }
```

FILE: app.js
```js
const layers = [
  ["F.Cu", "#c83434"], ["B.Cu", "#4d7fc4"], ["F.Adhesive", "#840084"], ["B.Adhesive", "#000084"],
  ["F.Paste", "#a5948c"], ["B.Paste", "#00aeae"], ["F.Silkscreen", "#f2eda1"], ["B.Silkscreen", "#e8b2a7"],
  ["F.Mask", "#6b3580", 1], ["B.Mask", "#0c8270", 1], ["User.Drawings", "#c2c2c2"], ["User.Comments", "#5994dc"],
  ["User.Eco1", "#b4dbd2"], ["User.Eco2", "#d8c852"], ["Edge.Cuts", "#d0d2cd"], ["Margin", "#ff26e2"],
  ["F.Courtyard", "#ff26e2"], ["B.Courtyard", "#26e9ff"], ["F.Fab", "#afafaf"], ["B.Fab", "#585d84"],
  ["User.1", "#c2c2c2"], ["User.2", "#5994dc"], ["User.3", "#b4dbd2"], ["User.4", "#d8c852"]
];
document.getElementById("layers").innerHTML = layers.map(([name, color, hatch], i) =>
  `<li${i ? "" : ' aria-current="true"'}><i${hatch ? ' class="hatch"' : ""} style="background-color:${color}"></i>` +
  `<button aria-label="Toggle ${name}"><svg viewBox="0 0 14 14"><use href="#eye"/></svg></button><span>${name}</span></li>`
).join("");

const rows = [271.5, 292.5, 314, 335.5, 356.5, 378, 399.5];
const pin = (x, y, dir, label) => {
  const edge = x + 21.5 * dir;
  const left = Math.min(x, edge);
  const mid = x + 9 * dir;
  return `<rect class="clear" x="${left}" y="${y - 8.5}" width="21.5" height="17"/><circle class="clear" cx="${x}" cy="${y}" r="8.5"/>` +
    `<rect class="cu" x="${left}" y="${y - 7}" width="21.5" height="14"/><circle class="cu" cx="${x}" cy="${y}" r="7"/>` +
    `<circle cx="${x}" cy="${y}" r="4" fill="#061426" stroke="#c9a23c" stroke-width="1.2"/>` +
    `<g class="tiny padlabel"><text x="${mid}" y="${y}">${label}</text><text x="${mid}" y="${y + 6}">x</text></g>`;
};
document.getElementById("pins").innerHTML =
  rows.map(y => `<use href="#arrow" x="394" y="${y + 12}"/>`).join("") +
  rows.map((y, i) => pin(400, y, -1, i + 1) + pin(528.5, y, 1, 14 - i)).join("") +
  rows.map(y => `<use href="#arrow" x="395" y="${y + 12}"/><use href="#arrow" x="544" y="${y - 2}"/>`).join("");

const pads = [
  [453.5, 262, "17", "MTDI"], [475, 262, "22", "MTDO"], [453.5, 284, "18", "EN"],
  [475, 284, "21", "GND"], [453.5, 305, "19", "MTMS"], [475, 305, "20", "MTCK"]
];
document.getElementById("testpads").innerHTML = pads.map(([x, y, number, name]) =>
  `<circle class="cu" cx="${x}" cy="${y}" r="6"/><g class="tiny padlabel"><text x="${x}" y="${y + 2}">${number}</text></g>` +
  `<text class="siglabel" text-anchor="middle" transform="translate(${x + 13} ${y}) rotate(-90)">${name}</text>` +
  `<use href="#arrow" x="${x + 14}" y="${y + 5}"/>`
).join("");
```
